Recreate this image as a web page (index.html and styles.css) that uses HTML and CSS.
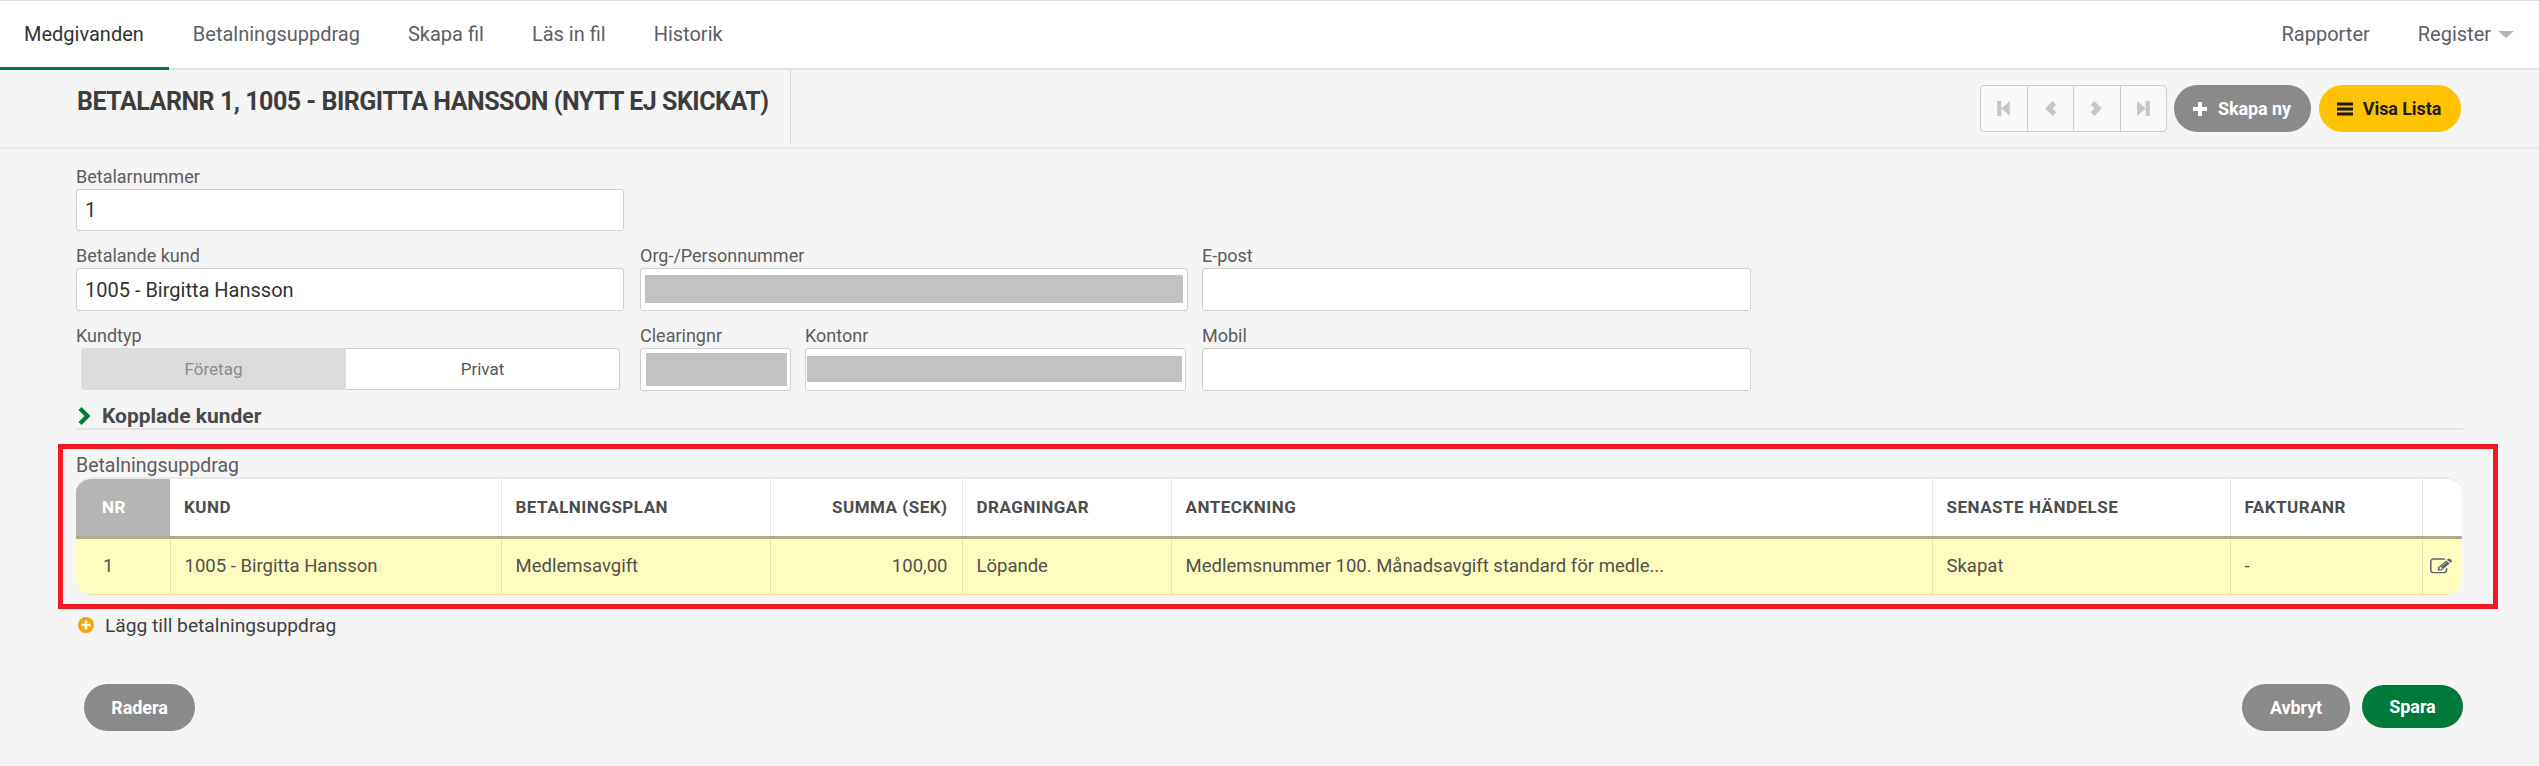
FILE: index.html
```html
<!DOCTYPE html>
<html lang="sv">
<head>
<meta charset="utf-8">
<title>Medgivanden</title>
<link rel="stylesheet" href="styles.css">
</head>
<body>
<nav class="tabs">
  <div class="tabs-left">
    <a class="tab active">Medgivanden</a>
    <a class="tab">Betalningsuppdrag</a>
    <a class="tab">Skapa fil</a>
    <a class="tab">Läs in fil</a>
    <a class="tab">Historik</a>
  </div>
  <div class="tabs-right">
    <a class="tab">Rapporter</a>
    <a class="tab tab-last">Register <span class="caret"></span></a>
  </div>
</nav>
<header class="toolbar">
  <div class="title-box"><h1 class="title">BETALARNR 1, 1005 - BIRGITTA HANSSON (NYTT EJ SKICKAT)</h1></div>
  <div class="actions">
    <div class="pager">
      <span class="pager-cell"><svg class="pager-icon" viewBox="0 0 16 16"><path d="M2 1h4v14H2zM6 8 14 1v14z"/></svg></span>
      <span class="pager-cell"><svg class="pager-icon" viewBox="0 0 16 16"><path d="M10 1 13.500 4.500 10 8l3.500 3.500L10 15 3 8z"/></svg></span>
      <span class="pager-cell"><svg class="pager-icon" viewBox="0 0 16 16"><path d="M6 1 2.500 4.500 6 8l-3.500 3.500L6 15 13 8z"/></svg></span>
      <span class="pager-cell"><svg class="pager-icon" viewBox="0 0 16 16"><path d="M14 1h-4v14h4zM10 8 2 1v14z"/></svg></span>
    </div>
    <a class="btn btn-gray btn-new"><svg class="btn-icon" viewBox="0 0 16 16"><path d="M6 1h4v5h5v4h-5v5H6v-5H1V6h5z" fill="#fff"/></svg>Skapa ny</a>
    <a class="btn btn-yellow"><svg class="btn-icon" viewBox="0 0 16 16"><path d="M0 1.500h16v3H0zM0 6.500h16v3H0zM0 11.500h16v3H0z" fill="#1a1a1a"/></svg>Visa Lista</a>
  </div>
</header>
<main class="content">
  <div class="row">
    <div class="field w-548"><label class="lbl">Betalarnummer</label><div class="input h-42">1</div></div>
  </div>
  <div class="row">
    <div class="field w-548"><label class="lbl">Betalande kund</label><div class="input h-43">1005 - Birgitta Hansson</div></div>
    <div class="field w-548 ml-16"><label class="lbl">Org-/Personnummer</label><div class="input h-43 redact-org"><span class="mask mask-org"></span></div></div>
    <div class="field w-549 ml-14"><label class="lbl">E-post</label><div class="input h-43"></div></div>
  </div>
  <div class="row">
    <div class="field w-548"><label class="lbl">Kundtyp</label>
      <div class="toggle"><span class="toggle-off">Företag</span><span class="toggle-on">Privat</span></div>
    </div>
    <div class="field w-151 ml-16"><label class="lbl">Clearingnr</label><div class="input h-43 redact-clr"><span class="mask mask-clr"></span></div></div>
    <div class="field w-381 ml-14"><label class="lbl">Kontonr</label><div class="input h-43 redact-kto"><span class="mask mask-kto"></span></div></div>
    <div class="field w-549 ml-16"><label class="lbl">Mobil</label><div class="input h-43"></div></div>
  </div>
  <div class="linked">
    <svg class="chevron" viewBox="0 0 13 18"><path d="M3.500 0 12.500 9 3.500 18 .5 15 6.500 9 .5 3z"/></svg>
    <span class="linked-text">Kopplade kunder</span>
  </div>
  <section class="marked">
    <div class="lbl lbl-section">Betalningsuppdrag</div>
    <div class="table-wrap">
      <table class="grid">
        <colgroup>
          <col class="c1"><col class="c2"><col class="c3"><col class="c4"><col class="c5"><col class="c6"><col class="c7"><col class="c8"><col class="c9">
        </colgroup>
        <thead>
          <tr>
            <th class="nr-head">NR</th><th>KUND</th><th>BETALNINGSPLAN</th><th class="num">SUMMA (SEK)</th><th>DRAGNINGAR</th><th>ANTECKNING</th><th>SENASTE HÄNDELSE</th><th>FAKTURANR</th><th></th>
          </tr>
        </thead>
        <tbody>
          <tr>
            <td class="nr-cell">1</td><td>1005 - Birgitta Hansson</td><td>Medlemsavgift</td><td class="num">100,00</td><td>Löpande</td><td>Medlemsnummer 100. Månadsavgift standard för medle...</td><td>Skapat</td><td>-</td>
            <td class="edit"><svg class="edit-icon" viewBox="0 0 1792 1792" preserveAspectRatio="none"><path d="M888 1184l116-116-152-152-116 116v56h96v96h56zm440-720q-16-16-33 1l-350 350q-17 17-1 33t33-1l350-350q17-17 1-33zm80 594v190q0 119-84.500 203.500t-203.500 84.500h-832q-119 0-203.500-84.500t-84.500-203.500v-832q0-119 84.500-203.500t203.500-84.500h832q63 0 117 25 15 7 18 23 3 17-9 29l-49 49q-14 14-32 8-23-6-45-6h-832q-66 0-113 47t-47 113v832q0 66 47 113t113 47h832q66 0 113-47t47-113v-126q0-13 9-22l64-64q15-15 35-7t20 29zm-96-738l288 288-672 672h-288v-288zm444 132l-92 92-288-288 92-92q28-28 68-28t68 28l152 152q28 28 28 68t-28 68z"/></svg></td>
          </tr>
        </tbody>
      </table>
    </div>
  </section>
  <a class="add-link"><svg class="add-icon" viewBox="0 0 16 16"><circle cx="8" cy="8" r="8" fill="#f5a60a"/><path d="M6.700 3.500h2.600v3.200h3.200v2.600H9.300v3.200H6.700V9.300H3.500V6.700h3.200z" fill="#fff"/></svg>Lägg till betalningsuppdrag</a>
  <footer class="footer">
    <a class="btn btn-gray btn-del">Radera</a>
    <div class="footer-right">
      <a class="btn btn-gray btn-cancel">Avbryt</a>
      <a class="btn btn-green">Spara</a>
    </div>
  </footer>
</main>
</body>
</html>
```
FILE: styles.css
```css
* { box-sizing: border-box; }
html, body { margin: 0; height: 766px; overflow: hidden; }
body { background: #f5f5f5; font-family: Roboto, "Liberation Sans", sans-serif; color: #4a4a4a; }

.tabs { height: 70px; background: #fff; border-top: 1px solid #dedede; border-bottom: 2px solid #e3e3e3; display: flex; justify-content: space-between; }
.tabs-left, .tabs-right { display: flex; }
.tab { height: 69px; margin-bottom: -2px; padding: 0 24px; font-size: 20px; line-height: 67px; color: #5b6068; }
.tab.active { color: #333; border-bottom: 3px solid #007a3d; padding-right: 25px; }
.tab-last { padding-right: 25px; }
.caret { display: inline-block; width: 0; height: 0; margin-left: 2px; vertical-align: 3px; border-left: 8px solid transparent; border-right: 8px solid transparent; border-top: 7px solid #b5b5b5; }

.toolbar { height: 79px; border-bottom: 2px solid #e6e6e6; display: flex; justify-content: space-between; align-items: flex-start; padding-right: 78px; }
.title-box { width: 791px; height: 73px; padding-left: 77px; border-right: 1px solid #d4d4d4; }
.title { margin: 19px 0 0; font-size: 25px; line-height: 26px; font-weight: 700; color: #3d3d3d; letter-spacing: -.48px; white-space: nowrap; }
.actions { display: flex; align-items: center; margin-top: 15px; }
.pager { display: flex; height: 47px; width: 187px; border: 1px solid #ccc; border-radius: 4px; background: #f7f8f8; margin-right: 7px; }
.pager-cell { flex: 1; display: flex; align-items: center; justify-content: center; border-right: 1px solid #ccc; }
.pager-cell:last-child { border-right: 0; }
.pager-icon { width: 17px; height: 17px; fill: #c6c6c6; }

.btn { display: flex; align-items: center; justify-content: center; height: 47px; border-radius: 24px; font-size: 18px; font-weight: 700; letter-spacing: -.1px; }
.btn-icon { width: 16px; height: 16px; margin-right: 10px; }
.btn-gray { background: #8a8a8a; color: #fff; }
.btn-yellow { background: #ffc200; color: #1c1c1c; width: 142px; margin-left: 8px; padding-right: 2px; }
.btn-new { width: 137px; padding-right: 2px; }
.btn-green { background: #007a3a; color: #fff; width: 101px; height: 43px; margin-top: 1px; margin-left: 12px; }
.btn-del { width: 111px; margin-left: 8px; }
.btn-cancel { width: 108px; }

.content { padding: 17px 76px 0 76px; }
.row { display: flex; margin-bottom: 14px; }
.field { display: flex; flex-direction: column; }
.w-548 { width: 548px; }
.w-549 { width: 549px; }
.w-151 { width: 151px; }
.w-381 { width: 381px; }
.ml-14 { margin-left: 14px; }
.ml-16 { margin-left: 16px; }
.lbl { display: block; height: 22px; margin-bottom: 1px; font-size: 18px; line-height: 22px; color: #5d5d5d; }
.lbl-section { font-size: 19.500px; line-height: 24px; }

.input { background: #fff; border: 1px solid #cfcfcf; border-radius: 3px; padding: 0 8px; font-size: 20px; color: #333; display: flex; align-items: center; }
.h-42 { height: 42px; }
.h-43 { height: 43px; }
.redact-org { padding: 6px 4px 7px 4px; align-items: stretch; }
.redact-clr { padding: 4px 3px 4px 5px; align-items: stretch; }
.redact-kto { padding: 7px 3px 8px 1px; align-items: stretch; }
.mask { flex: 1; background: #c2c2c2; }

.toggle { display: flex; height: 42px; margin-left: 5px; width: 539px; font-size: 17px; }
.toggle-off { width: 265px; background: #dcdcdc; color: #8a8a8a; display: flex; align-items: center; justify-content: center; border-radius: 3px 0 0 3px; }
.toggle-on { flex: 1; background: #fff; border: 1px solid #cfcfcf; border-left: 0; border-radius: 0 3px 3px 0; color: #555; display: flex; align-items: center; justify-content: center; }

.linked { display: flex; align-items: center; height: 25px; margin-top: 1px; padding-bottom: 1px; border-bottom: 2px solid #e3e3e3; }
.chevron { width: 13px; height: 18px; fill: #007a3d; margin: 0 11px 0 2px; }
.linked-text { font-size: 21px; font-weight: 700; color: #4a4a4a; }

.marked { margin: 14px -35px 0 -18px; border: 5px solid #ed1c24; padding: 5px 31px 9px 13px; }
.table-wrap { height: 118px; border-top: 2px solid #e8e8e8; border-radius: 16px; overflow: hidden; }
.grid { width: 100%; border-collapse: collapse; table-layout: fixed; font-size: 18.500px; }
.c1 { width: 94px; }
.c2 { width: 331px; }
.c3 { width: 269px; }
.c4 { width: 192px; }
.c5 { width: 209px; }
.c6 { width: 761px; }
.c7 { width: 298px; }
.c8 { width: 192px; }
.c9 { width: 40px; }
.grid th { height: 58px; background: #fff; padding: 0 14px; border-right: 1px solid #e6e6e6; border-bottom: 3px solid #b0ad85; text-align: left; font-size: 17px; font-weight: 700; letter-spacing: .5px; color: #4d4d4d; white-space: nowrap; }
.grid th:last-child, .grid td:last-child { border-right: 0; }
.grid th.nr-head { background: #b5b5b5; color: #fff; padding-left: 26px; border-right: 0; }
.grid td { height: 58px; background: #fffcc0; padding: 0 14px; border-right: 1px solid #e8e3ad; border-bottom: 2px solid #e8e3ad; color: #505050; white-space: nowrap; overflow: hidden; }
.grid td.nr-cell { padding-left: 27px; }
.grid .num { text-align: right; }
.grid td.edit { padding: 0 0 0 7px; }
.edit-icon { display: block; width: 22px; height: 19px; fill: #5f6470; }

.add-link { display: flex; align-items: center; height: 20px; margin-top: 6px; font-size: 19.200px; color: #3f3f3f; }
.add-icon { width: 16px; height: 16px; margin: 0 11px 0 2px; }

.footer { display: flex; justify-content: space-between; align-items: flex-start; margin-top: 49px; }
.footer-right { display: flex; align-items: flex-start; }
```
